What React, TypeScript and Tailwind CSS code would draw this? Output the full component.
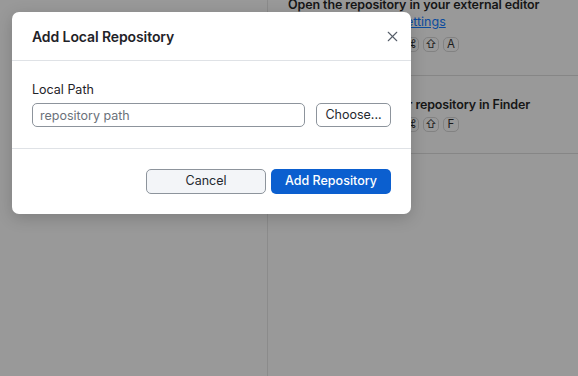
import React from "react";
import { X } from "lucide-react";

// petite touche de clavier (fond gris)
const Key = ({ k }: { k: string }) => (
  <span className="w-[16px] h-[15px] flex items-center justify-center rounded-[5px] border border-[#828282] text-[11.5px] leading-none text-[#1a1a1a]">
    {k}
  </span>
);

const Shortcut = ({ keys }: { keys: string[] }) => (
  <div className="flex items-center gap-[4px] h-[15px]">
    <span className="w-[111px] text-[12px] leading-[15px] text-[#2a2a2a]">Shortcut</span>
    {keys.map((k) => (
      <Key key={k} k={k} />
    ))}
  </div>
);

const Modal = () => (
  <div className="w-[399px] bg-white rounded-[7px] shadow-[0_4px_16px_rgba(0,0,0,0.18)] text-[#1f2328]">
    {/* header */}
    <div className="h-[49px] px-5 flex items-center justify-between border-b border-[#dfe2e6]">
      <h2 className="text-[14px] font-semibold tracking-[-0.1px] mt-[1px]">Add Local Repository</h2>
      <button className="w-[18px] h-[18px] flex items-center justify-center text-[#555d69] -mr-[10px]">
        <X size={17} strokeWidth={1.5} />
      </button>
    </div>

    {/* body */}
    <div className="px-5 pt-[20px] pb-[21px] border-b border-[#dfe2e6]">
      <label className="block text-[12.5px] leading-[17px] mb-[5px]">Local Path</label>
      <div className="flex gap-[11px]">
        <input
          placeholder="repository path"
          className="flex-1 h-[24px] px-[7px] rounded-[5px] border border-[#8d949c] text-[12.5px] placeholder:text-[#6b717a] outline-none"
        />
        <button className="w-[75px] h-[24px] rounded-[5px] border border-[#8d949c] bg-white text-[12.5px] text-[#24292f]">
          Choose...
        </button>
      </div>
    </div>

    {/* footer */}
    <div className="px-5 pt-[20px] pb-[20px] flex justify-end gap-[5px]">
      <button className="w-[120px] h-[25px] rounded-[5px] border border-[#8d949c] bg-[#f3f5f8] text-[12.5px] text-[#24292f]">
        Cancel
      </button>
      <button className="w-[120px] h-[25px] rounded-[5px] bg-[#0b5fcf] text-[12.5px] font-medium text-white">
        Add Repository
      </button>
    </div>
  </div>
);

export default function App() {
  return (
    <div
      className="relative w-[578px] h-[376px] overflow-hidden bg-[#999999]"
      style={{ fontFamily: "Inter, 'Noto Sans', sans-serif" }}
    >
      <div className="flex h-full">
        <div className="w-[268px] border-r border-[#8b8b8b]" />
        <div className="flex-1 overflow-hidden">
          <div className="-mt-[25px] pl-[20px]">
            <div className="pt-[21px] pb-[23px] border-b border-[#868686]">
              <div className="text-[12.5px] leading-[17px] font-semibold tracking-[-0.1px] text-[#161616]">
                Open the repository in your external editor
              </div>
              <div className="text-[12.5px] leading-[17px] text-[#161616]">
                Select an editor in{" "}
                <span className="text-[#0b4b9e] underline">Settings</span>
              </div>
              <div className="mt-[7px]">
                <Shortcut keys={["⌘", "⇧", "A"]} />
              </div>
            </div>
            <div className="pt-[20px] pb-[21px] border-b border-[#868686]">
              <div className="text-[12.5px] leading-[17px] font-semibold tracking-[-0.15px] text-[#161616]">
                View the files of your repository in Finder
              </div>
              <div className="mt-[4px]">
                <Shortcut keys={["⌘", "⇧", "F"]} />
              </div>
            </div>
          </div>
        </div>
      </div>

      <div className="absolute inset-0 pt-[12px] pl-[12px]">
        <Modal />
      </div>
    </div>
  );
}
